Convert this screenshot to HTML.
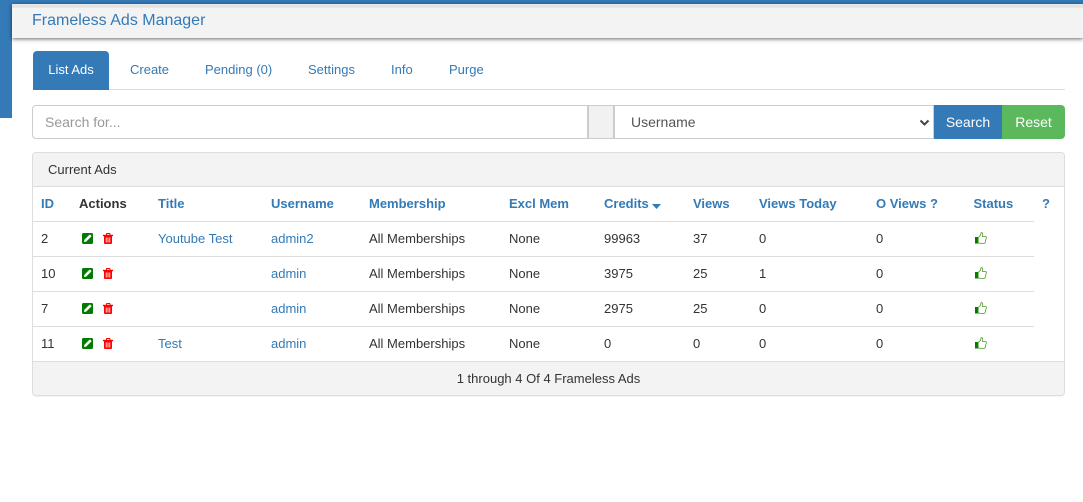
<!DOCTYPE html>
<html><head><meta charset="utf-8">
<style>
*{box-sizing:border-box}
html,body{margin:0;padding:0;background:#fff}
body{width:1083px;height:502px;position:relative;overflow:hidden;font-family:"Liberation Sans",Arial,sans-serif;font-size:13px;color:#333}
.a{position:absolute;white-space:nowrap}
.l{color:#337ab7}
.h{font-weight:bold;top:196px;line-height:16px}
.c{line-height:16px}
.line{position:absolute;height:1px;background:#ddd;left:33px;width:1001px}
svg{position:absolute;display:block}
</style></head><body>
<div class="a" style="left:0;top:0;width:1083px;height:4px;background:#337ab7"></div>
<div class="a" style="left:0;top:0;width:12px;height:118px;background:#337ab7"></div>
<div class="a" style="left:12px;top:4px;width:1071px;height:34px;background:linear-gradient(#e9e9e9 0,#dfdfdf 3px,#f3f3f3 4px);box-shadow:0 1px 4px rgba(0,0,0,.6)"></div>
<div class="a l" style="left:32px;top:11px;font-size:16px;line-height:20px">Frameless Ads Manager</div>

<div class="a" style="left:33px;top:89px;width:1032px;height:1px;background:#ddd"></div>
<div class="a" style="left:33px;top:51px;width:76px;height:39px;background:#337ab7;border-radius:4px 4px 0 0;color:#fff;text-align:center;line-height:37px">List Ads</div>
<div class="a l c" style="left:130px;top:62px">Create</div>
<div class="a l c" style="left:205px;top:62px">Pending (0)</div>
<div class="a l c" style="left:308px;top:62px">Settings</div>
<div class="a l c" style="left:391px;top:62px">Info</div>
<div class="a l c" style="left:449px;top:62px">Purge</div>

<div class="a" style="left:32px;top:105px;width:557px;height:34px;border:1px solid #ccc;border-right-width:2px;border-radius:4px 0 0 4px;color:#999;font-size:14px;line-height:32px;padding-left:12px">Search for...</div>
<div class="a" style="left:589px;top:105px;width:26px;height:34px;background:#f1f1f1;border:1px solid #ccc;border-left:0;border-right-width:2px"></div>
<div class="a" style="left:615px;top:105px;width:319px;height:34px;border:1px solid #ccc;border-left:0;color:#555;font-size:14px;line-height:32px;padding-left:16px">Username</div>
<svg style="left:919px;top:119px" width="11" height="8" viewBox="0 0 11 8"><path d="M1.5 1.5 L5.5 5.5 L9.5 1.5" fill="none" stroke="#444" stroke-width="2"/></svg>
<div class="a" style="left:934px;top:105px;width:68px;height:34px;background:#337ab7;color:#fff;font-size:14px;text-align:center;line-height:34px">Search</div>
<div class="a" style="left:1002px;top:105px;width:63px;height:34px;background:#5cb85c;color:#fff;font-size:14px;text-align:center;line-height:34px;border-radius:0 4px 4px 0">Reset</div>

<div class="a" style="left:32px;top:152px;width:1033px;height:244px;border:1px solid #ddd;border-radius:4px;box-shadow:0 1px 1px rgba(0,0,0,.05)"></div>
<div class="a" style="left:33px;top:153px;width:1031px;height:33px;background:#f3f3f3;border-radius:3px 3px 0 0"></div>
<div class="a" style="left:33px;top:186px;width:1031px;height:1px;background:#ddd"></div>
<div class="a c" style="left:48px;top:162px">Current Ads</div>
<div class="a" style="left:33px;top:361px;width:1031px;height:34px;background:#f3f3f3;border-top:1px solid #ddd;border-radius:0 0 3px 3px;text-align:center;line-height:34px">1 through 4 Of 4 Frameless Ads</div>

<div class="line" style="top:221px"></div>
<div class="line" style="top:256px"></div>
<div class="line" style="top:291px"></div>
<div class="line" style="top:326px"></div>

<div class="a h l" style="left:41px">ID</div>
<div class="a h" style="left:79px">Actions</div>
<div class="a h l" style="left:158px">Title</div>
<div class="a h l" style="left:271px">Username</div>
<div class="a h l" style="left:369px">Membership</div>
<div class="a h l" style="left:509px">Excl Mem</div>
<div class="a h l" style="left:604px">Credits</div>
<svg style="left:652px;top:204px" width="9" height="5" viewBox="0 0 9 5"><path d="M0 0H9L4.5 5Z" fill="#337ab7"/></svg>
<div class="a h l" style="left:693px">Views</div>
<div class="a h l" style="left:759px">Views Today</div>
<div class="a h l" style="left:876px">O Views ?</div>
<div class="a h l" style="left:973.5px">Status</div>
<div class="a h l" style="left:1042px">?</div>

<div class="a c" style="left:41px;top:231px">2</div>
<div class="a c l" style="left:158px;top:231px">Youtube Test</div>
<div class="a c l" style="left:271px;top:231px">admin2</div>
<div class="a c" style="left:369px;top:231px">All Memberships</div>
<div class="a c" style="left:509px;top:231px">None</div>
<div class="a c" style="left:604px;top:231px">99963</div>
<div class="a c" style="left:693px;top:231px">37</div>
<div class="a c" style="left:759px;top:231px">0</div>
<div class="a c" style="left:876px;top:231px">0</div>

<div class="a c" style="left:41px;top:266px">10</div>
<div class="a c l" style="left:271px;top:266px">admin</div>
<div class="a c" style="left:369px;top:266px">All Memberships</div>
<div class="a c" style="left:509px;top:266px">None</div>
<div class="a c" style="left:604px;top:266px">3975</div>
<div class="a c" style="left:693px;top:266px">25</div>
<div class="a c" style="left:759px;top:266px">1</div>
<div class="a c" style="left:876px;top:266px">0</div>

<div class="a c" style="left:41px;top:301px">7</div>
<div class="a c l" style="left:271px;top:301px">admin</div>
<div class="a c" style="left:369px;top:301px">All Memberships</div>
<div class="a c" style="left:509px;top:301px">None</div>
<div class="a c" style="left:604px;top:301px">2975</div>
<div class="a c" style="left:693px;top:301px">25</div>
<div class="a c" style="left:759px;top:301px">0</div>
<div class="a c" style="left:876px;top:301px">0</div>

<div class="a c" style="left:41px;top:336px">11</div>
<div class="a c l" style="left:158px;top:336px">Test</div>
<div class="a c l" style="left:271px;top:336px">admin</div>
<div class="a c" style="left:369px;top:336px">All Memberships</div>
<div class="a c" style="left:509px;top:336px">None</div>
<div class="a c" style="left:604px;top:336px">0</div>
<div class="a c" style="left:693px;top:336px">0</div>
<div class="a c" style="left:759px;top:336px">0</div>
<div class="a c" style="left:876px;top:336px">0</div>

<svg width="0" height="0" style="position:absolute">
<defs>
<g id="e"><rect x="0" y="0" width="11" height="11" rx="1.5" fill="#007a00"/><path d="M2 9 L2.4 6.8 L7.4 1.8 Q8 1.4 8.6 1.9 L9.2 2.5 Q9.6 3.1 9.2 3.6 L4.2 8.6 Z" fill="#fff"/></g>
<g id="t"><path d="M3.5 2 V1 Q3.5 .5 4 .5 H6.5 Q7 .5 7 1 V2" fill="none" stroke="#f00" stroke-width="1"/><rect x="0" y="1.8" width="10" height="1.4" fill="#f00"/><path d="M1 3H9V10Q9 11 8 11H2Q1 11 1 10Z" fill="#f00"/><path d="M3.2 4.5V9.5M5 4.5V9.5M6.8 4.5V9.5" stroke="#fff" stroke-width=".8"/></g>
<g id="u"><rect x="0" y="5" width="3.2" height="6.5" fill="#007a00"/><path d="M3.2 5.5 L5.6 3.2 L6 .9 Q6.4 .2 7.1 .7 Q8.2 1.8 7.4 4.5 H10.6 Q11.7 4.8 11.2 6.2 L10.2 10.4 Q9.9 11.4 9 11.4 H5 L3.2 10.8 Z" fill="#fff" stroke="#4a9a20" stroke-width=".8"/></g>
</defs></svg>
<svg style="left:82px;top:233px" width="11" height="11"><use href="#e"/></svg>
<svg style="left:103px;top:233px" width="10" height="11"><use href="#t"/></svg>
<svg style="left:82px;top:268px" width="11" height="11"><use href="#e"/></svg>
<svg style="left:103px;top:268px" width="10" height="11"><use href="#t"/></svg>
<svg style="left:82px;top:303px" width="11" height="11"><use href="#e"/></svg>
<svg style="left:103px;top:303px" width="10" height="11"><use href="#t"/></svg>
<svg style="left:82px;top:338px" width="11" height="11"><use href="#e"/></svg>
<svg style="left:103px;top:338px" width="10" height="11"><use href="#t"/></svg>
<svg style="left:975px;top:232px" width="12" height="12"><use href="#u"/></svg>
<svg style="left:975px;top:267px" width="12" height="12"><use href="#u"/></svg>
<svg style="left:975px;top:302px" width="12" height="12"><use href="#u"/></svg>
<svg style="left:975px;top:337px" width="12" height="12"><use href="#u"/></svg>
</body></html>
